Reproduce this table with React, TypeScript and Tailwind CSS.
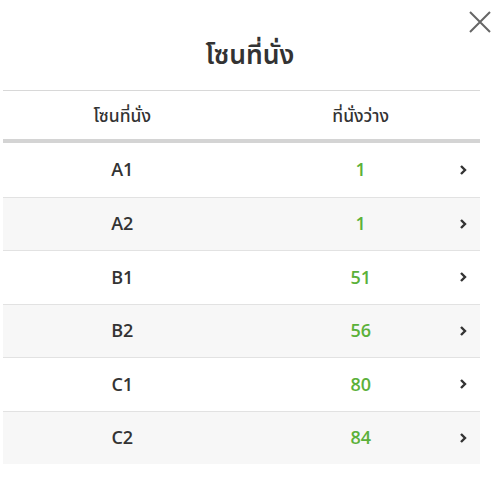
import React from "react";

const zones = [
  { name: "A1", free: 1 },
  { name: "A2", free: 1 },
  { name: "B1", free: 51 },
  { name: "B2", free: 56 },
  { name: "C1", free: 80 },
  { name: "C2", free: 84 },
];

const font = {
  fontFamily:
    '"Open Sans", "Noto Sans Thai", "Noto Sans Thai UI", "Noto Sans Thai Looped", "Noto Sans", "Loma", "Garuda", sans-serif',
};

export default function App() {
  return (
    <div className="relative w-[500px] h-[492px] bg-white text-[#333]" style={font}>
      <button className="absolute right-[9px] top-[11px] w-[22px] h-[22px] text-[#666]">
        <svg viewBox="0 0 22 22" className="w-full h-full" fill="none" stroke="currentColor" strokeWidth="2">
          <path d="M1 1 L21 21 M21 1 L1 21" />
        </svg>
      </button>

      <h2 className="pt-[35px] h-[90px] text-center text-[26.5px] font-semibold leading-[38px]">โซนที่นั่ง</h2>

      <div className="ml-[3px] w-[477px]">
        <div className="flex h-[53px] items-center border-t border-[#d8d8d8] border-b-[4px] border-b-[#d4d4d4] text-[17.5px] font-medium">
          <div className="w-1/2 text-center">โซนที่นั่ง</div>
          <div className="w-1/2 text-center">ที่นั่งว่าง</div>
        </div>
        {zones.map((z, i) => (
          <div
            key={z.name}
            className={`relative flex h-[53.5px] items-center text-[18px] font-semibold ${
              i % 2 === 1 ? "bg-[#f7f7f7]" : "bg-white"
            } ${i > 0 ? "border-t border-[#e2e2e2]" : ""}`}
          >
            <div className="w-1/2 text-center">{z.name}</div>
            <div className="w-1/2 text-center text-[#5bb13a]">{z.free}</div>
            <svg
              viewBox="0 0 8 12"
              className="absolute right-[13px] top-1/2 -translate-y-1/2 w-[8px] h-[12px] text-[#333]"
              fill="none"
              stroke="currentColor"
              strokeWidth="2.4"
            >
              <path d="M2 2 L6 6 L2 10" />
            </svg>
          </div>
        ))}
      </div>
    </div>
  );
}
